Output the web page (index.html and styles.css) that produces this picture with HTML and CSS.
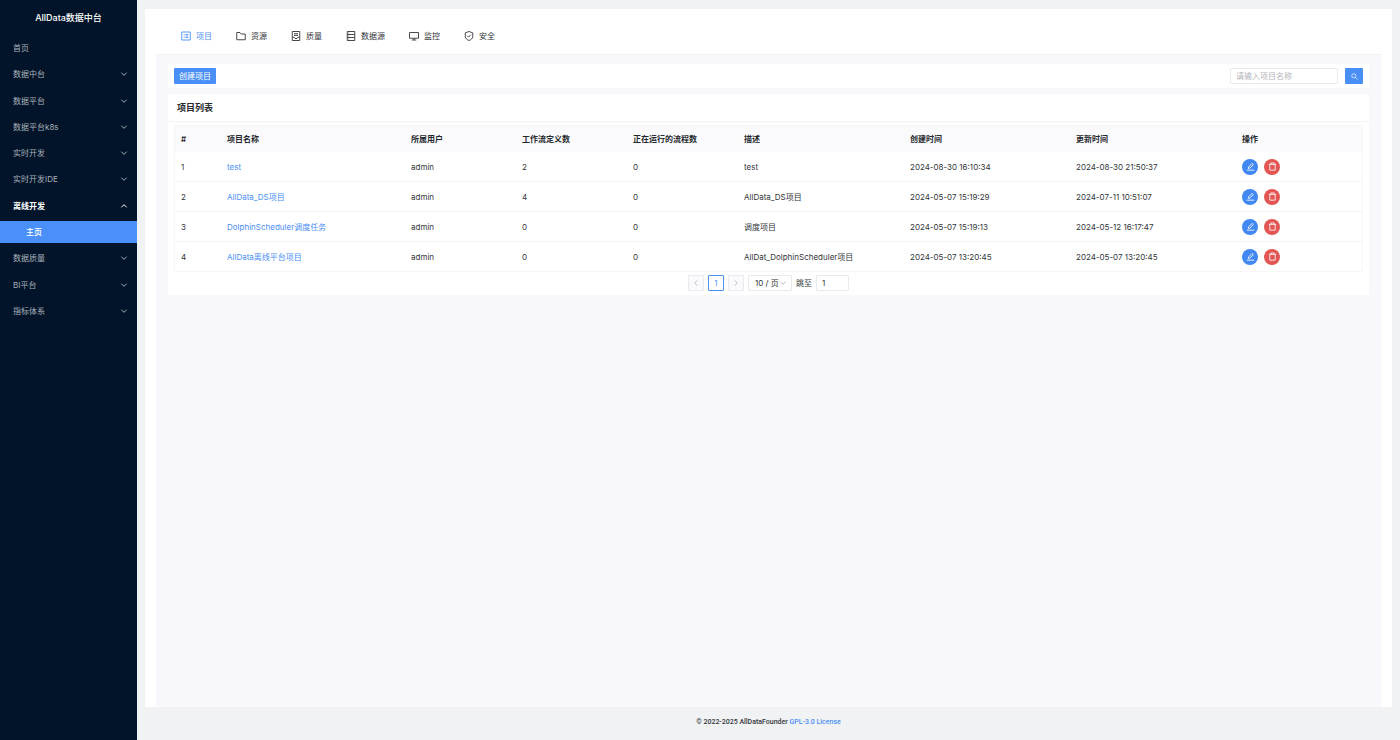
FILE: index.html
```html
<!DOCTYPE html>
<html lang="zh-CN">
<head>
<meta charset="utf-8">
<title>AllData数据中台</title>
<link rel="stylesheet" href="styles.css">
</head>
<body>
<svg class="sprite" aria-hidden="true">
  <symbol id="i-down" viewBox="0 0 12 12"><path d="M2 4l4 4 4-4"/></symbol>
  <symbol id="i-up" viewBox="0 0 12 12"><path d="M2 8l4-4 4 4"/></symbol>
  <symbol id="i-left" viewBox="0 0 12 12"><path d="M8 2L4 6l4 4"/></symbol>
  <symbol id="i-right" viewBox="0 0 12 12"><path d="M4 2l4 4-4 4"/></symbol>
  <symbol id="i-edit" viewBox="0 0 16 16"><path d="M4 11.500l.6-2.800 6.200-6.200 2.200 2.200-6.200 6.200zM1.500 14.500h13"/></symbol>
  <symbol id="i-trash" viewBox="0 0 16 16"><path d="M1.500 4.200h13M5 4V1.700h6V4M3.200 4.500v10h9.600v-10"/></symbol>
</svg>
<div class="app">
  <aside class="sidebar">
    <h1 class="brand">AllData数据中台</h1>
    <nav>
      <ul class="menu">
        <li><a class="item" href="#">首页</a></li>
        <li><a class="item" href="#">数据中台<svg class="arrow"><use href="#i-down"/></svg></a></li>
        <li><a class="item" href="#">数据平台<svg class="arrow"><use href="#i-down"/></svg></a></li>
        <li><a class="item" href="#">数据平台k8s<svg class="arrow"><use href="#i-down"/></svg></a></li>
        <li><a class="item" href="#">实时开发<svg class="arrow"><use href="#i-down"/></svg></a></li>
        <li><a class="item" href="#">实时开发IDE<svg class="arrow"><use href="#i-down"/></svg></a></li>
        <li><a class="item open" href="#">离线开发<svg class="arrow"><use href="#i-up"/></svg></a></li>
        <li><a class="item sub" href="#" aria-current="page">主页</a></li>
        <li><a class="item" href="#">数据质量<svg class="arrow"><use href="#i-down"/></svg></a></li>
        <li><a class="item" href="#">BI平台<svg class="arrow"><use href="#i-down"/></svg></a></li>
        <li><a class="item" href="#">指标体系<svg class="arrow"><use href="#i-down"/></svg></a></li>
      </ul>
    </nav>
  </aside>
  <div class="content">
    <main class="page">
      <nav class="tabs">
        <a class="tab active" href="#"><svg viewBox="0 0 20 20"><path d="M1.500 2h17v16h-17zM5.500 6.800h1.500M5.500 10h1.500M5.500 13.200h1.500M9 6.800h5.500M9 10h5.500M9 13.200h5.500"/></svg>项目</a>
        <a class="tab" href="#"><svg viewBox="0 0 20 20"><path d="M1.500 3h6.500l2.500 3h8v11.500h-17z"/></svg>资源</a>
        <a class="tab" href="#"><svg viewBox="0 0 20 20"><path d="M2.500 1h15v18h-15zM6 5.500h8M6 8.800h8M3 12.500h3.500l1.500 2.500h4l1.500-2.500h3.500"/></svg>质量</a>
        <a class="tab" href="#"><svg viewBox="0 0 20 20"><path d="M2.500 1h15v18h-15zM2.500 7h15M2.500 13h15M5 4.200h1.500M5 10h1.500M5 15.800h1.500"/></svg>数据源</a>
        <a class="tab" href="#"><svg viewBox="0 0 20 20"><path d="M1 3h18v11.500H1zM10 14.500v3.500M5.500 18h9"/></svg>监控</a>
        <a class="tab" href="#"><svg viewBox="0 0 20 20"><path d="M10 1l7.500 2.700v8c0 3-3.500 5.600-7.500 7.300-4-1.700-7.500-4.300-7.500-7.300v-8zM6.500 9.500l2.700 2.700 4.500-5"/></svg>安全</a>
      </nav>
      <div class="body">
        <section class="card toolbar">
          <button class="btn create" type="button">创建项目</button>
          <form class="search">
            <input class="field" type="text" placeholder="请输入项目名称" aria-label="请输入项目名称">
            <button class="btn find" type="button" aria-label="搜索"><svg viewBox="0 0 16 16"><circle cx="6.500" cy="6.500" r="4.800"/><path d="M10 10l5 5"/></svg></button>
          </form>
        </section>
        <section class="card">
          <h2 class="title">项目列表</h2>
          <div class="list">
            <table>
              <colgroup><col class="c-no"><col class="c-name"><col class="c-num"><col class="c-num"><col class="c-num"><col class="c-time"><col class="c-time"><col class="c-time"><col></colgroup>
              <thead>
                <tr><th>#</th><th>项目名称</th><th>所属用户</th><th>工作流定义数</th><th>正在运行的流程数</th><th>描述</th><th>创建时间</th><th>更新时间</th><th>操作</th></tr>
              </thead>
              <tbody>
                <tr><td>1</td><td><a href="#">test</a></td><td>admin</td><td>2</td><td>0</td><td>test</td><td>2024-08-30 16:10:34</td><td>2024-08-30 21:50:37</td><td><div class="ops"><button class="round edit" type="button" aria-label="编辑"><svg><use href="#i-edit"/></svg></button><button class="round del" type="button" aria-label="删除"><svg><use href="#i-trash"/></svg></button></div></td></tr>
                <tr><td>2</td><td><a href="#">AllData_DS项目</a></td><td>admin</td><td>4</td><td>0</td><td>AllData_DS项目</td><td>2024-05-07 15:19:29</td><td>2024-07-11 10:51:07</td><td><div class="ops"><button class="round edit" type="button" aria-label="编辑"><svg><use href="#i-edit"/></svg></button><button class="round del" type="button" aria-label="删除"><svg><use href="#i-trash"/></svg></button></div></td></tr>
                <tr><td>3</td><td><a href="#">DolphinScheduler调度任务</a></td><td>admin</td><td>0</td><td>0</td><td>调度项目</td><td>2024-05-07 15:19:13</td><td>2024-05-12 16:17:47</td><td><div class="ops"><button class="round edit" type="button" aria-label="编辑"><svg><use href="#i-edit"/></svg></button><button class="round del" type="button" aria-label="删除"><svg><use href="#i-trash"/></svg></button></div></td></tr>
                <tr><td>4</td><td><a href="#">AllData离线平台项目</a></td><td>admin</td><td>0</td><td>0</td><td>AllDat_DolphinScheduler项目</td><td>2024-05-07 13:20:45</td><td>2024-05-07 13:20:45</td><td><div class="ops"><button class="round edit" type="button" aria-label="编辑"><svg><use href="#i-edit"/></svg></button><button class="round del" type="button" aria-label="删除"><svg><use href="#i-trash"/></svg></button></div></td></tr>
              </tbody>
            </table>
            <div class="pager">
              <button class="pg off" type="button" disabled aria-label="上一页"><svg><use href="#i-left"/></svg></button>
              <button class="pg on" type="button">1</button>
              <button class="pg off" type="button" disabled aria-label="下一页"><svg><use href="#i-right"/></svg></button>
              <span class="size"><select aria-label="每页条数"><option>10 / 页</option></select><svg><use href="#i-down"/></svg></span>
              <label for="jump">跳至</label>
              <input id="jump" class="field" type="text" value="1">
            </div>
          </div>
        </section>
      </div>
    </main>
    <footer class="footer">© 2022-2025 AllDataFounder <a href="#">GPL-3.0 License</a></footer>
  </div>
</div>
</body>
</html>
```
FILE: styles.css
```css
* { box-sizing: border-box; }
body {
  margin: 0;
  font: 8px/16px Inter, "Noto Sans CJK SC", sans-serif;
  color: #333639;
  background: #f0f2f4;
}
a { color: #4a8ff5; text-decoration: none; }
button, input, select { font: inherit; color: inherit; margin: 0; }
button { display: flex; align-items: center; justify-content: center; padding: 0; border: 0; }
svg { fill: none; stroke: currentColor; stroke-width: 1.5; flex: none; }
.sprite { position: absolute; width: 0; height: 0; }

.app { display: flex; min-height: 100vh; }

.sidebar { width: 137px; flex: none; background: #011429; }
.brand { margin: 0; height: 37px; font-size: 9px; line-height: 35px; font-weight: 500; color: #fff; text-align: center; }
.menu {
  display: flex; flex-direction: column; justify-content: space-between;
  min-height: 285px; margin: 0; padding: 0; list-style: none;
}
.item {
  display: flex; align-items: center; justify-content: space-between;
  height: 22px; padding: 0 9px 0 13px; color: #a9b0b9;
}
.arrow { width: 8px; height: 8px; }
.item.open { color: #fff; font-weight: 600; }
.item.sub { padding-left: 26px; color: #fff; background: #4a90f8; font-weight: 500; }

.content { flex: 1; min-width: 0; display: flex; flex-direction: column; padding: 9px 8px 0; }
.page { flex: 1; display: flex; flex-direction: column; padding: 0 11px; background: #fff; }
.tabs { display: flex; align-items: center; gap: 24px; height: 45px; padding: 9px 25px 0; }
.tab { display: flex; align-items: center; gap: 5px; color: #333639; }
.tab.active { color: #4a8ff5; }
.tab svg { width: 10px; height: 10px; stroke-width: 1.8; }

.body { flex: 1; display: flex; flex-direction: column; gap: 6px; padding: 9px 12px; background: #f8f8fc; border-top: 1px solid #f1f2f5; }
.card { background: #fff; }
.toolbar { display: flex; justify-content: space-between; align-items: center; padding: 4px 6px; }
.btn { height: 16px; color: #fff; background: #4a8ff5; border-radius: 1px; }
.create { padding: 0 5px; }
.search { display: flex; gap: 7px; }
.field { height: 16px; padding: 0 5px; background: #fff; border: 1px solid #e9eaee; border-radius: 1px; outline: 0; }
.field::placeholder { color: #b4b6ba; }
.search .field { width: 108px; }
.find { width: 18px; }
.find svg { width: 7px; height: 7px; }

.title { margin: 0; padding: 0 9px; font-size: 9px; line-height: 27px; font-weight: 600; color: #25282c; border-bottom: 1px solid #f2f2f5; }
.list { padding: 3px 6px 4px; }
table { width: 100%; table-layout: fixed; border-collapse: separate; border-spacing: 0; border: 1px solid #f6f6f9; }
.c-no { width: 46px; }
.c-name { width: 184px; }
.c-num { width: 111px; }
.c-time { width: 166px; }
th, td { padding: 0 6px; text-align: left; white-space: nowrap; }
th { height: 26px; font-weight: 600; color: #25282c; background: #fafafc; }
td { height: 30px; border-bottom: 1px solid #f4f4f7; }
tbody tr:last-child td { height: 29px; border-bottom: 0; }
.ops { display: flex; gap: 6px; }
.round { width: 16px; height: 16px; border-radius: 50%; color: #fff; }
.round svg { width: 9px; height: 9px; }
.edit { background: #4288f2; }
.del { background: #e25552; }

.pager { display: flex; justify-content: center; align-items: center; gap: 4px; padding-top: 3px; }
.pg { width: 16px; height: 16px; border: 1px solid #e9eaee; border-radius: 1px; background: #fff; }
.pg.off { background: #fafafc; color: #bfc2c7; }
.pg.on { border-color: #4a8ff5; color: #4a8ff5; }
.pg svg { width: 8px; height: 8px; }
.size { display: flex; align-items: center; width: 44px; height: 16px; padding: 0 4px 0 6px; border: 1px solid #e9eaee; border-radius: 1px; background: #fff; }
.size select { flex: 1; min-width: 0; padding: 0; border: 0; background: none; appearance: none; }
.size svg { width: 8px; height: 8px; color: #bfc2c7; }
.pager .field { width: 33px; }

.footer { padding: 7px 0 10px; font-family: Roboto, "Noto Sans CJK SC", sans-serif; font-size: 7px; font-weight: 500; text-align: center; }
```
